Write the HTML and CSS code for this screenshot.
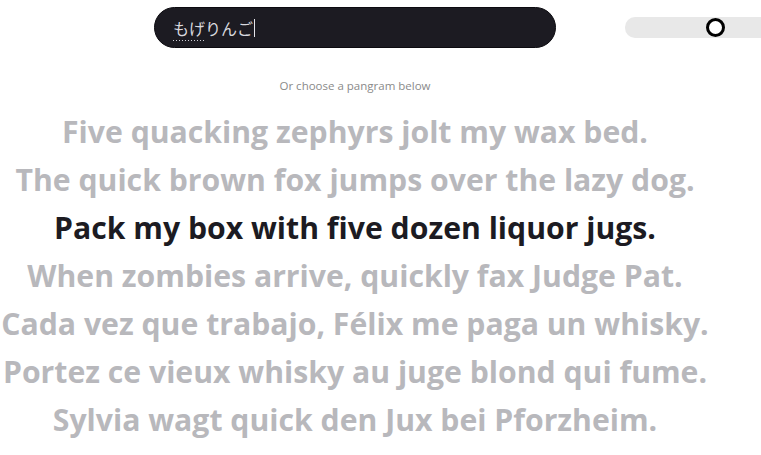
FILE: index.html
```html
<!DOCTYPE html>
<html lang="en">
<head>
<meta charset="utf-8">
<title>Pangrams</title>
<link rel="stylesheet" href="styles.css">
</head>
<body>
<div class="page">
  <header class="top">
    <div class="search">
      <span class="query"><span class="ime">もげ</span>りんご</span><span class="caret"></span>
    </div>
  </header>
  <p class="hint">Or choose a pangram below</p>
  <ul class="pangrams">
    <li>Five quacking zephyrs jolt my wax bed.</li>
    <li>The quick brown fox jumps over the lazy dog.</li>
    <li class="active">Pack my box with five dozen liquor jugs.</li>
    <li>When zombies arrive, quickly fax Judge Pat.</li>
    <li>Cada vez que trabajo, Félix me paga un whisky.</li>
    <li>Portez ce vieux whisky au juge blond qui fume.</li>
    <li>Sylvia wagt quick den Jux bei Pforzheim.</li>
  </ul>
</div>
<div class="toggle"><span class="knob"></span></div>
</body>
</html>
```
FILE: styles.css
```css
html, body {
  margin: 0;
  padding: 0;
  background: #ffffff;
  overflow: hidden;
}
body {
  width: 761px;
  height: 455px;
  position: relative;
  font-family: "Open Sans", "Noto Sans CJK JP", sans-serif;
}
.page {
  width: 710px;
  display: flex;
  flex-direction: column;
  align-items: center;
}
.top {
  padding-top: 7px;
  display: flex;
  justify-content: center;
  width: 100%;
}
.search {
  box-sizing: border-box;
  width: 402px;
  height: 41px;
  border-radius: 21px;
  background: #1c1b22;
  border: 1px solid #0c0b10;
  display: flex;
  align-items: center;
  padding-left: 18px;
  color: #d8d8de;
  font-family: "Noto Sans CJK JP", sans-serif;
  font-size: 16px;
}
.ime {
  background-image: linear-gradient(to right, #d0d0d8 50%, transparent 50%);
  background-size: 3px 1px;
  background-repeat: repeat-x;
  background-position: 3px 100%;
  padding-bottom: 1px;
}
.caret {
  display: inline-block;
  width: 1px;
  height: 18px;
  background: #e4e4ea;
  margin-left: 1px;
}
.hint {
  margin: 30px 0 0;
  font-family: "Open Sans", sans-serif;
  font-size: 11.5px;
  line-height: 16px;
  color: #8a8a8a;
}
.pangrams {
  list-style: none;
  margin: 14px 0 0;
  padding: 0;
  text-align: center;
}
.pangrams li {
  font-family: "Open Sans", sans-serif;
  font-weight: 700;
  font-size: 30.2px;
  line-height: 48px;
  color: #b8b8bc;
  white-space: nowrap;
  font-variant-ligatures: none;
}
.pangrams li.active {
  color: #1c1b22;
}
.toggle {
  position: absolute;
  left: 625px;
  top: 17px;
  width: 170px;
  height: 21px;
  border-radius: 10px;
  background: #e8e8e8;
}
.knob {
  position: absolute;
  left: 81px;
  top: 1px;
  box-sizing: border-box;
  width: 19px;
  height: 19px;
  border-radius: 50%;
  border: 3px solid #000;
  background: #fff;
}
```
